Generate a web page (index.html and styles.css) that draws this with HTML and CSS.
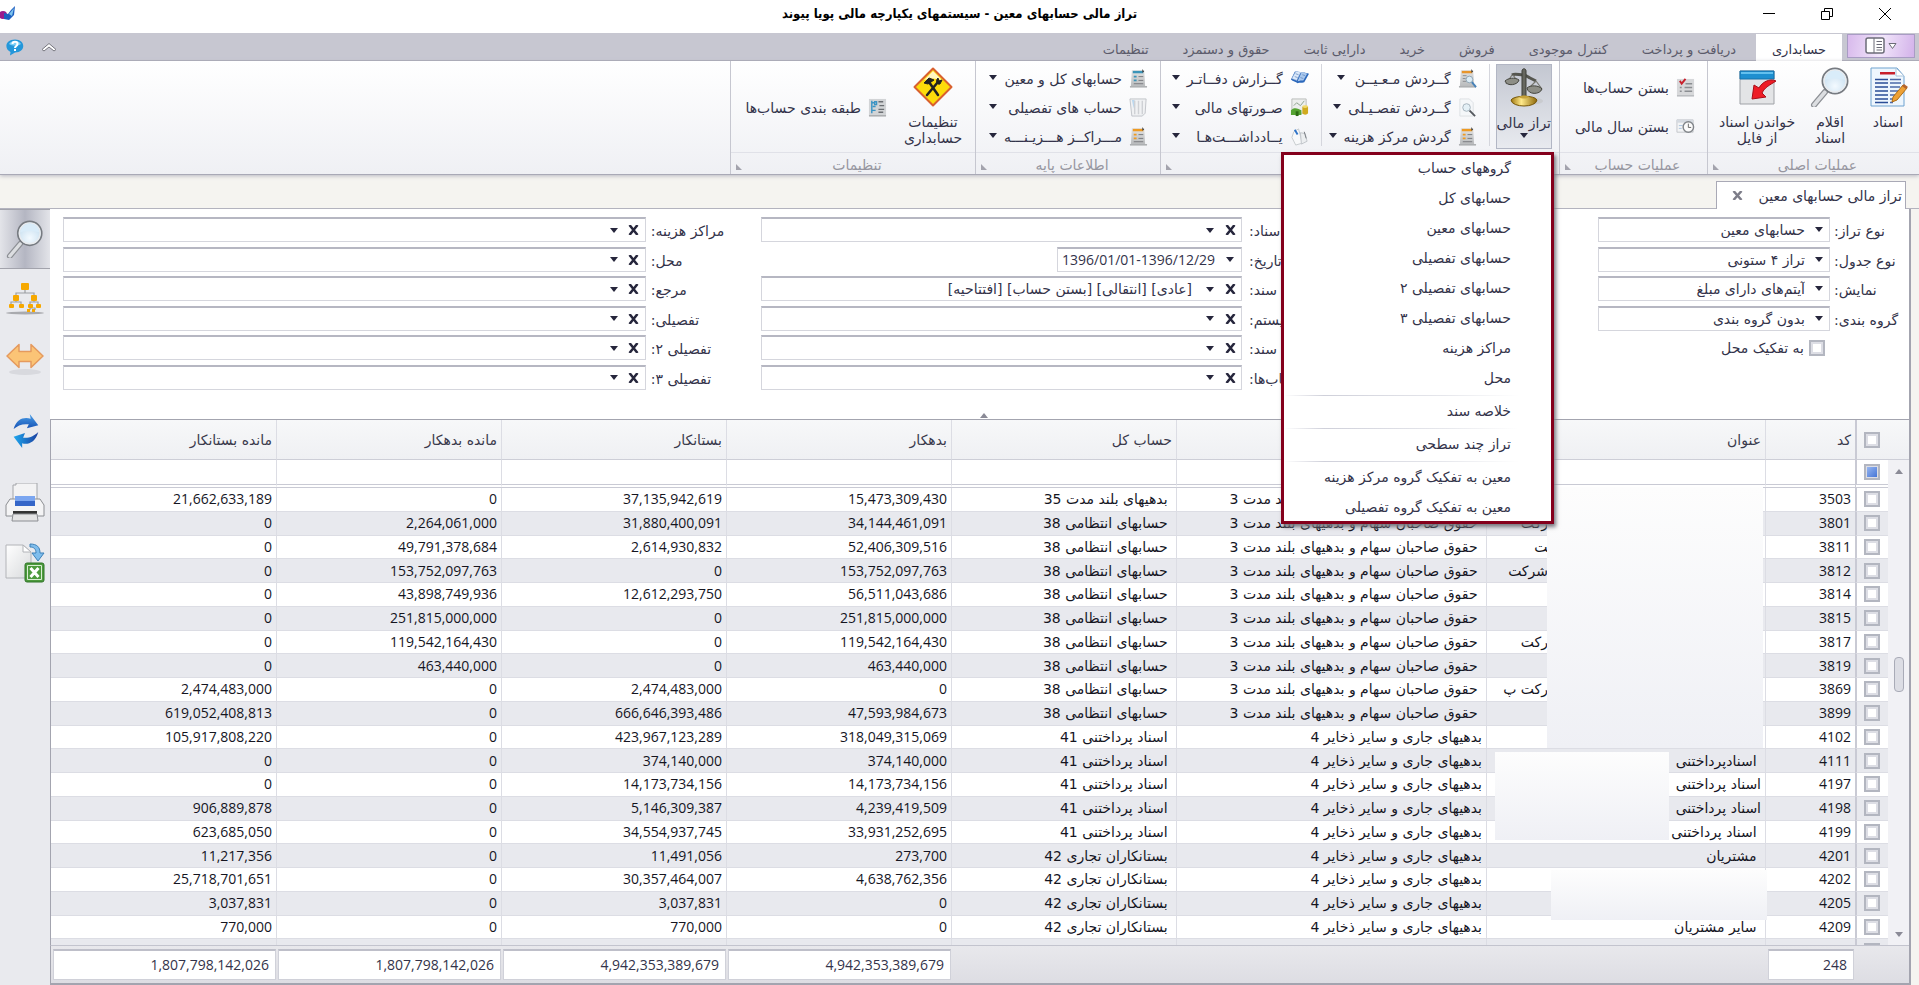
FILE: index.html
```html
<!doctype html>
<html lang="fa" dir="rtl">
    <head>
        <meta charset="UTF-8" />
        <meta name="viewport" content="width=device-width, initial-scale=1.0" />
        <title>تراز مالی حسابهای معین - سیستمهای یکپارچه مالی پویا پیوند</title>
        <link rel="stylesheet" href="styles.css">
    </head>
    <body>
        <!-- icons -->
        <svg class="sprite" aria-hidden="true">
            <defs>
                <linearGradient id="g-gray" x1="0" y1="0" x2="0" y2="1">
                    <stop offset="0" stop-color="#e4e4e4" />
                    <stop offset="1" stop-color="#b9bbbd" />
                </linearGradient>
                <linearGradient id="g-paper" x1="0" y1="0" x2="1" y2="1">
                    <stop offset="0" stop-color="#ffffff" />
                    <stop offset="1" stop-color="#d8dadc" />
                </linearGradient>
                <linearGradient id="g-blue" x1="0" y1="0" x2="0" y2="1">
                    <stop offset="0" stop-color="#4aa0e8" />
                    <stop offset="1" stop-color="#1550b4" />
                </linearGradient>
                <linearGradient id="g-blue2" x1="0" y1="0" x2="1" y2="0">
                    <stop offset="0" stop-color="#1fa8ee" />
                    <stop offset="1" stop-color="#1a3fa0" />
                </linearGradient>
                <linearGradient id="g-gold" x1="0" y1="0" x2="1" y2="0">
                    <stop offset="0" stop-color="#a27a10" />
                    <stop offset=".4" stop-color="#ffe98a" />
                    <stop offset="1" stop-color="#8d6708" />
                </linearGradient>
                <radialGradient id="g-lens" cx=".5" cy=".7" r=".7">
                    <stop offset="0" stop-color="#f3faff" />
                    <stop offset="1" stop-color="#bfd9ec" />
                </radialGradient>
            </defs>
            <symbol id="i-doc" viewBox="0 0 40 40">
                <path d="M3 1h26l7 8v30H3z" fill="#eef6fd" stroke="#6fa3d0" />
                <path d="M28 1v8h8z" fill="#fff" stroke="#a9c4dd" />
                <path d="M12 5h15v2.500H12z" fill="#c8202c" />
                <path d="M7 12.500h13M7 16h13M7 20h13M7 24h13M7 28h13M7 32h13M7 35.500h13" stroke="#2a4d96" stroke-width="1.500" />
                <path d="M22 12.500h11M22 16h11M22 20h10M22 24h8M22 28h5M22 32h3M22 35.500h3" stroke="#4c69a8" stroke-width="1.500" />
                <path d="M25 30 35 18l4 3-10 12-5 2z" fill="#eea136" stroke="#ad6c15" />
                <path d="m36 17 4 3-2 2-4-3z" fill="#b4642c" />
            </symbol>
            <symbol id="i-lens" viewBox="0 0 40 40">
                <path d="m15 25-11 13" stroke="#8c8f94" stroke-width="6" stroke-linecap="round" />
                <path d="m15 25-11 13" stroke="#dcdee1" stroke-width="3.500" stroke-linecap="round" />
                <circle cx="25" cy="14" r="12.500" fill="url(#g-lens)" stroke="#777b81" stroke-width="2" />
                <circle cx="25" cy="14" r="11" fill="none" stroke="#e8ebee" stroke-width="1.500" />
                <path d="M15 13c5-2 14-2 20 0-1-12-18-13-20 0z" fill="#d9ecf9" />
            </symbol>
            <symbol id="i-import" viewBox="0 0 40 40">
                <path d="M3 4h34v33H3z" fill="#e3e4e6" stroke="#9fa2a7" />
                <path d="M3 4h34v8H3z" fill="#1d8fd0" stroke="#1470aa" />
                <path d="M4 5h32v2H4z" fill="#62c0ee" />
                <path d="M39 14c-6-3-14 1-17 7l-5-3-2 14 14-2-4-4c3-6 8-8 14-12z" fill="#ee1c25" stroke="#a80e17" />
            </symbol>
            <symbol id="i-scale" viewBox="0 0 40 40">
                <ellipse cx="24" cy="33" rx="15" ry="4" fill="#c9cbcf" />
                <path d="M8 7c3-2 7 0 11 0 3 0 5 2 7 3l6 3" fill="none" stroke="#55564f" stroke-width="3" />
                <path d="m8 7-6 9M9 7l5 7M32 13l-7 7M32 13l6 8" stroke="#77776f" stroke-width="1.200" />
                <path d="M1 13c3-3 10-4 14-1-1 5-12 7-14 1z" fill="#8d8e86" stroke="#45463f" />
                <path d="M23 20c3-3 12-3 15 1-2 6-14 6-15-1z" fill="#8d8e86" stroke="#45463f" />
                <path d="M18 3c0-3 4-3 4 0v27h-4z" fill="#66675f" stroke="#3d3e38" />
                <path d="M7 32c3-5 24-5 26 0-1 8-25 8-26 0z" fill="url(#g-gold)" stroke="#75560a" />
                <path d="M15 29c2-2 8-2 10 0-2 2-8 2-10 0z" fill="#c7a23a" />
            </symbol>
            <symbol id="i-tools" viewBox="0 0 40 40">
                <path d="M20 1.500 38.500 20 20 38.500 1.500 20z" fill="#fddc0b" stroke="#d9602e" stroke-width="2" stroke-linejoin="round" />
                <path d="M20 4 29 13c-6-2-12-2-18 0z" fill="#fff6c0" />
                <path d="m16 15 9 13M25 15 14 28" stroke="#222" stroke-width="2.500" stroke-linecap="round" />
                <path d="m11 16 5-5 5 2-6 4z" fill="#222" stroke="#222" stroke-linejoin="round" />
                <path d="M25 11c-3 3-1 7 2 6l2-4-3 1z" fill="#222" stroke="#222" stroke-linejoin="round" />
            </symbol>
            <symbol id="i-sheet" viewBox="0 0 20 20">
                <path d="M3 1h13l1 17H2z" fill="url(#g-gray)" />
                <path d="M1 18h18v1.500H1z" fill="#a5a7aa" />
                <path d="M4 2h11v2.500H4z" fill="var(--tone)" />
                <path d="m14 0 2 3-2 1z" fill="#444" />
                <path d="M5 7h3v2H5zM5 11h3v2H5z" fill="var(--tone)" />
                <path d="M10 8h5M10 12h5M5 15.500h10" stroke="#77797d" />
            </symbol>
            <symbol id="i-sheet-search" viewBox="0 0 20 20">
                <path d="M3 1h13l1 17H2z" fill="url(#g-gray)" />
                <path d="M1 18h18v1.500H1z" fill="#a5a7aa" />
                <path d="M4 2h11v2.500H4z" fill="#e8952a" />
                <path d="m14 0 2 3-2 1z" fill="#444" />
                <path d="M5 7h4M5 10h3M5 13h4" stroke="#8a8c8f" />
                <path d="m14 13 5 6" stroke="#4682b8" stroke-width="2" />
                <circle cx="12" cy="11" r="3.500" fill="#dcecf6" stroke="#8fa5b5" />
            </symbol>
            <symbol id="i-page-search" viewBox="0 0 20 20">
                <path d="M2 1h10l4 4v14H2z" fill="#f5f7f9" stroke="#dde0e4" />
                <path d="m12 13 6 6" stroke="#54585e" stroke-width="2" />
                <circle cx="9" cy="10" r="4" fill="#e4f0f6" stroke="#a4b2bc" />
            </symbol>
            <symbol id="i-book" viewBox="0 0 20 20">
                <path d="M1 11 5 3c2-1 4 0 6 1 3-1 6 0 9 1l-5 9c-3 1-5 0-7 1-2-2-5-2-7-4z" fill="#2c68bb" />
                <path d="M6 3c2-1 4 0 5 1l-4 8c-2-1-3-1-5-2z" fill="#dbe9fa" stroke="#9bb7dc" stroke-width=".5" />
                <path d="M12 4c2-1 4 0 6 1l-4 7c-2 0-4 0-6 1z" fill="#a9c8ee" />
                <path d="m6 5 3 1M5 8l3 1M13 6l3 1M11 9l3 1" stroke="#5b7fb3" stroke-width=".7" />
            </symbol>
            <symbol id="i-chart" viewBox="0 0 20 20">
                <path d="M2 1h15v15H2z" fill="#eceeed" stroke="#b9bcb9" />
                <path d="m4 8 3-3 4 3 4-5" fill="none" stroke="#8ca18c" />
                <path d="M1 13c3-4 8-2 11 0v5H1z" fill="#55a332" />
                <path d="M6 14h3v5H6z" fill="#2c6b14" />
                <ellipse cx="16" cy="9" rx="3" ry="1.500" fill="#f4da65" />
                <path d="M13 9c1 2 5 2 6 0v7c-1 2-5 2-6 0z" fill="#d0aa1d" />
            </symbol>
            <symbol id="i-notes" viewBox="0 0 20 20">
                <path d="m4 5 5-3 4 15-7 2-4-8z" fill="#f8f9fa" stroke="#c6cace" />
                <path d="m11 6 5 1 2 8-6 3z" fill="#eceef0" stroke="#c0c4c9" />
                <path d="m5 3 3 5" stroke="#2f74c9" stroke-width="2" />
                <path d="m15 5 2 7" stroke="#777b81" />
            </symbol>
            <symbol id="i-pages" viewBox="0 0 20 20">
                <path d="M1 1h17l-1 15-3 3H3z" fill="#f0f1f3" stroke="#c0c3c8" />
                <path d="M3 2h3l-1 9z" fill="#bcd8ee" />
                <path d="M6 3v14M10 3v14M14 3v14" stroke="#cfd1d5" stroke-width="1.500" />
            </symbol>
            <symbol id="i-check-sheet" viewBox="0 0 20 20">
                <path d="M1 1h18v17H1z" fill="#d7d8da" />
                <path d="M1 18h18v1.500H1z" fill="#b5b7ba" />
                <path d="m4 3 2 3 4-5" fill="none" stroke="#c8202c" stroke-width="2" />
                <path d="M10 6h7M4 10h2M9 10h8M4 14h2M9 14h8" stroke="#8b8e92" stroke-width="1.500" />
            </symbol>
            <symbol id="i-clock" viewBox="0 0 20 20">
                <path d="M1 3h17v13H1z" fill="#f3f4f5" stroke="#c3c6ca" />
                <path d="M1 3h17v3H1z" fill="#d5dae1" />
                <path d="M3 9h4M3 12h3" stroke="#a9c3de" />
                <circle cx="13" cy="10.500" r="5.500" fill="#fbfbfb" stroke="#808489" stroke-width="1.500" />
                <path d="M13 7v4h3" fill="none" stroke="#666" />
            </symbol>
            <symbol id="i-class" viewBox="0 0 20 20">
                <path d="M1 1h18v17H1z" fill="#d2d4d6" />
                <path d="M1 18h18v1.500H1z" fill="#a5a7aa" />
                <path d="M4 3v13M4 5h3M5 9h3M4 13h4M7 4h2v3H7z" fill="none" stroke="#3b94c4" stroke-width="1.500" />
                <path d="M11 4h5M12 8h5M11 12h6M11 15h5" stroke="#6c6f73" stroke-width="1.500" />
            </symbol>
            <symbol id="i-tree" viewBox="0 0 38 32">
                <ellipse cx="19" cy="30" rx="19" ry="1.500" fill="#a9aaae" />
                <path d="M19 6v4M10 14v-4h18v4M10 17v2M28 17v2M5 22v-3h10v3M24 22v-3h8v3M24 27v-2h5v2" fill="none" stroke="#9c9ea2" stroke-width="1.200" />
                <g fill="#f6a800"><rect x="15" y="0" width="8" height="7" rx="1" /><rect x="7" y="12" width="6" height="6" rx="1" /><rect x="25" y="12" width="6" height="6" rx="1" /><rect x="3" y="21" width="5" height="4" rx="1" /><rect x="13" y="21" width="5" height="4" rx="1" /><rect x="22" y="21" width="5" height="4" rx="1" /><rect x="30" y="21" width="5" height="4" rx="1" /><rect x="21" y="26" width="3" height="3" /><rect x="26" y="26" width="3" height="3" /></g>
            </symbol>
            <symbol id="i-swap" viewBox="0 0 38 32">
                <ellipse cx="19" cy="29" rx="16" ry="3" fill="#d8d9de" />
                <path d="M1 13 13 1.500v7h12v-7L37 13 25 24.500v-6H13v6z" fill="#fbc476" stroke="#e59a5e" stroke-width="1.500" stroke-linejoin="round" />
            </symbol>
            <symbol id="i-refresh" viewBox="0 0 38 38">
                <path d="M7 17C10 6 18 4 25 6l-1-5 9 12-12 3 2-4c-6-1-12 1-16 5z" fill="url(#g-blue)" />
                <path d="M33 20c-3 11-11 14-17 12v5L7 25l12-4-2 5c6 1 12-2 16-6z" fill="url(#g-blue2)" />
            </symbol>
            <symbol id="i-print" viewBox="0 0 40 40">
                <path d="M8 2h3V0h21v20H8z" fill="#f3f3f4" stroke="#a4a6aa" />
                <path d="M5 16h30l4 6v11H1V22z" fill="#f4f4f5" stroke="#8c8e92" />
                <path d="M10 13h20v9H10z" fill="#7ba6f0" />
                <path d="M10 18h20v5H10z" fill="#3566c8" />
                <path d="M8 28h24v4H8z" fill="#333" />
                <path d="M8 31h24l1 7H7z" fill="#e4e4e5" stroke="#8c8e92" />
            </symbol>
            <symbol id="i-excel" viewBox="0 0 40 40">
                <path d="M1 2h17l8 7v26H1z" fill="url(#g-paper)" stroke="#b2b4b8" />
                <path d="M18 2v7h8z" fill="#fff" stroke="#b2b4b8" />
                <path d="M25 1c7 0 10 3 10 9h4l-6 8-6-8h4c0-4-2-6-6-6z" fill="#7fbdec" stroke="#3b80b8" />
                <rect x="20" y="20" width="19" height="19" rx="2" fill="#4d9a3d" stroke="#2f7427" />
                <path d="M22.500 22.500h14v14h-14z" fill="none" stroke="#d9edd3" />
                <path d="m25.500 25 8 9M33.500 25l-8 9" stroke="#fff" stroke-width="3" />
            </symbol>
        </svg>

        <header class="titlebar">
            <div class="window-buttons">
                <button type="button" aria-label="بستن"><svg width="14" height="14"><path d="M1 1l12 12M13 1L1 13" stroke="#000" fill="none" /></svg></button>
                <button type="button" aria-label="بازگردانی"><svg width="14" height="14"><path d="M1.500 4.500h8v8h-8zM4.500 4V1.500h8v8H10" stroke="#000" fill="none" /></svg></button>
                <button type="button" aria-label="کوچک کردن"><svg width="14" height="14"><path d="M1 6.500h12" stroke="#000" fill="none" /></svg></button>
            </div>
            <h1>تراز مالی حسابهای معین - سیستمهای یکپارچه مالی پویا پیوند</h1>
            <svg class="app-logo" width="16" height="16" viewBox="0 0 16 16"><circle cx="3" cy="9" r="4" fill="#9a1c8c" /><path d="M4 7l4 1 3-4 4-4-1 9-5 5-5-1z" fill="#1d5fc0" /><path d="M9 8l5-6-2 8z" fill="#7fc4ee" /></svg>
        </header>

        <nav class="tabs">
            <button type="button" class="app-button" aria-label="منو">
                <svg width="32" height="18" viewBox="0 0 32 18"><rect x="1" y="1" width="18" height="15" rx="2" fill="#fff" stroke="#6c6c78" stroke-width="1.500" /><path d="M9 1v15M11.500 4.500H17M11.500 7.500H17M11.500 10.500H17M11.500 13H17" stroke="#6c6c78" /><path d="M24 6.500h7l-3.500 5z" fill="#fff" stroke="#6c6c78" /></svg>
            </button>
            <a href="#" class="tab active">حسابداری</a>
            <a href="#" class="tab">دریافت و پرداخت</a>
            <a href="#" class="tab">کنترل موجودی</a>
            <a href="#" class="tab">فروش</a>
            <a href="#" class="tab">خرید</a>
            <a href="#" class="tab">دارایی ثابت</a>
            <a href="#" class="tab">حقوق و دستمزد</a>
            <a href="#" class="tab">تنظیمات</a>
            <div class="tabs-end">
                <button type="button" aria-label="جمع کردن"><svg width="16" height="10" viewBox="0 0 16 10"><path d="M1 7.500 8 1.500l7 6-2 1.500-5-4-5 4z" fill="#fff" stroke="#77777f" /></svg></button>
                <button type="button" aria-label="راهنما"><svg width="18" height="17" viewBox="0 0 18 17"><path d="M9 .5c11 0 11 13 0 13L4 16.500l.5-3.500C-2 10-1 .5 9 .5z" fill="#2497da" /><path d="M3 5c2-4 10-4 12 0-3 2-9 2-12 0z" fill="#7fd0f6" /><path d="M6.500 5c0-3 5-3 5 0 0 2-2.500 2-2.500 4M9 10v2" fill="none" stroke="#fff" stroke-width="2" /></svg></button>
            </div>
        </nav>

        <section class="ribbon">
            <div class="group group-main">
                <div class="group-body">
                    <button type="button" class="big w-doc"><svg><use href="#i-doc" /></svg><span>اسناد</span></button>
                    <button type="button" class="big w-items"><svg><use href="#i-lens" /></svg><span>اقلام<br>اسناد</span></button>
                    <button type="button" class="big w-import"><svg><use href="#i-import" /></svg><span>خواندن اسناد<br>از فایل</span></button>
                </div>
                <div class="group-name">عملیات اصلی</div>
            </div>
            <div class="group group-close">
                <div class="group-body">
                    <div class="stack two">
                        <button type="button" class="small"><svg><use href="#i-check-sheet" /></svg>بستن حساب‌ها</button>
                        <button type="button" class="small"><svg><use href="#i-clock" /></svg>بستن سال مالی</button>
                    </div>
                </div>
                <div class="group-name">عملیات حساب</div>
            </div>
            <div class="group group-reports">
                <div class="group-body">
                    <button type="button" class="big pressed"><svg><use href="#i-scale" /></svg><span>تراز مالی</span><i class="arrow"></i></button>
                    <div class="stack ruled wide">
                        <button type="button" class="small"><svg><use href="#i-sheet-search" /></svg>گــردش مـعـیــن<i class="arrow"></i></button>
                        <button type="button" class="small"><svg><use href="#i-page-search" /></svg>گــردش تفصـیـلی<i class="arrow"></i></button>
                        <button type="button" class="small orange"><svg><use href="#i-sheet" /></svg>گردش مرکز هزینه<i class="arrow"></i></button>
                    </div>
                    <div class="stack ruled">
                        <button type="button" class="small"><svg><use href="#i-book" /></svg>گــزارش دفــاتـر<i class="arrow"></i></button>
                        <button type="button" class="small"><svg><use href="#i-chart" /></svg>صـورتهای مالی<i class="arrow"></i></button>
                        <button type="button" class="small"><svg><use href="#i-notes" /></svg>یــادداشـــت‌هـا<i class="arrow"></i></button>
                    </div>
                </div>
                <div class="group-name"></div>

                <ul class="menu">
                    <li><button type="button">گروههای حساب</button></li>
                    <li><button type="button">حسابهای کل</button></li>
                    <li><button type="button">حسابهای معین</button></li>
                    <li><button type="button">حسابهای تفصیلی</button></li>
                    <li><button type="button">حسابهای تفصیلی ۲</button></li>
                    <li><button type="button">حسابهای تفصیلی ۳</button></li>
                    <li><button type="button">مراکز هزینه</button></li>
                    <li><button type="button">محل</button></li>
                    <li class="split"><button type="button">خلاصه سند</button></li>
                    <li class="split"><button type="button">تراز چند سطحی</button></li>
                    <li class="split"><button type="button">معین به تفکیک گروه مرکز هزینه</button></li>
                    <li><button type="button">معین به تفکیک گروه تفصیلی</button></li>
                </ul>
            </div>
            <div class="group group-base">
                <div class="group-body">
                    <div class="stack">
                        <button type="button" class="small"><svg><use href="#i-sheet" /></svg>حسابهای کل و معین<i class="arrow"></i></button>
                        <button type="button" class="small"><svg><use href="#i-pages" /></svg>حساب های تفصیلی<i class="arrow"></i></button>
                        <button type="button" class="small orange"><svg><use href="#i-sheet" /></svg>مـــراکــز هـــزیـنـــه<i class="arrow"></i></button>
                    </div>
                </div>
                <div class="group-name">اطلاعات پایه</div>
            </div>
            <div class="group group-settings">
                <div class="group-body">
                    <button type="button" class="big w-tools"><svg><use href="#i-tools" /></svg><span>تنظیمات<br>حسابداری</span></button>
                    <div class="stack one">
                        <button type="button" class="small"><svg><use href="#i-class" /></svg>طبقه بندی حساب‌ها</button>
                    </div>
                </div>
                <div class="group-name">تنظیمات</div>
            </div>
        </section>

        <div class="documents">
            <div class="document-tab">
                <span>تراز مالی حسابهای معین</span>
                <button type="button" class="x" aria-label="بستن"><svg width="11" height="9" viewBox="0 0 11 9"><path d="M1.500 0l8 9M9.500 0l-8 9" stroke="currentColor" stroke-width="2.500" /></svg></button>
            </div>
        </div>

        <div class="workspace">
            <main class="content">
                <form class="filters">
                    <div class="fields fields-type">
                        <label for="kind">نوع تراز:</label>
                        <div class="pick"><select id="kind"><option>حسابهای معین</option></select></div>
                        <label for="table-kind">نوع جدول:</label>
                        <div class="pick"><select id="table-kind"><option>تراز ۴ ستونی</option></select></div>
                        <label for="show">نمایش:</label>
                        <div class="pick"><select id="show"><option>آیتم‌های دارای مبلغ</option></select></div>
                        <label for="grouping">گروه بندی:</label>
                        <div class="pick"><select id="grouping"><option>بدون گروه بندی</option></select></div>
                        <label class="by-place"><input type="checkbox">به تفکیک محل</label>
                    </div>
                    <div class="fields fields-doc" id="doc-fields"></div>
                    <div class="fields fields-detail" id="detail-fields"></div>
                    <i class="collapse"></i>
                </form>

                <div class="grid">
                    <div class="scroll">
                        <div class="scroll-head"></div>
                        <div class="track"><i class="up"></i><i class="thumb"></i><i class="down"></i></div>
                    </div>
                    <div class="table-wrap">
                        <table>
                            <colgroup>
                                <col class="c-check"><col class="c-code"><col><col class="c-group">
                                <col class="c-num"><col class="c-num"><col class="c-num"><col class="c-num"><col class="c-num">
                            </colgroup>
                            <thead>
                                <tr>
                                    <th><input type="checkbox" aria-label="انتخاب همه"></th>
                                    <th>کد</th>
                                    <th>عنوان</th>
                                    <th></th>
                                    <th>حساب کل</th>
                                    <th>بدهکار</th>
                                    <th>بستانکار</th>
                                    <th>مانده بدهکار</th>
                                    <th>مانده بستانکار</th>
                                </tr>
                                <tr class="search-row">
                                    <td><input type="checkbox" class="mixed" aria-label="فیلتر انتخاب"></td>
                                    <td></td><td></td><td></td><td></td><td></td><td></td><td></td><td></td>
                                </tr>
                            </thead>
                            <tbody id="rows"></tbody>
                        </table>
                        <div class="mask mask-top"></div>
                        <div class="mask mask-middle"></div>
                        <div class="mask mask-bottom"></div>
                    </div>
                </div>

                <div class="totals">
                    <output class="t-count">248</output>
                    <output class="t-sum">4,942,353,389,679</output>
                    <output class="t-sum">4,942,353,389,679</output>
                    <output class="t-sum">1,807,798,142,026</output>
                    <output class="t-sum">1,807,798,142,026</output>
                </div>
            </main>

            <aside class="side">
                <button type="button" class="on" aria-label="جستجو"><svg width="38" height="38"><use href="#i-lens" /></svg></button>
                <button type="button" aria-label="درخت"><svg width="38" height="32"><use href="#i-tree" /></svg></button>
                <button type="button" aria-label="عرض ستونها"><svg width="38" height="32"><use href="#i-swap" /></svg></button>
                <button type="button" class="apart" aria-label="بازخوانی"><svg width="36" height="36"><use href="#i-refresh" /></svg></button>
                <button type="button" class="apart" aria-label="چاپ"><svg width="40" height="40"><use href="#i-print" /></svg></button>
                <button type="button" aria-label="خروجی اکسل"><svg width="40" height="40"><use href="#i-excel" /></svg></button>
            </aside>
        </div>

        <script>
            const docFields = [
                ["اسناد:", ""],
                ["تاریخ:", "1396/01/01-1396/12/29", "date"],
                ["نوع سند:", "[عادی] [انتقالی] [بستن حساب] [افتتاحیه]"],
                ["سیستم:", ""],
                ["وضعیت سند:", ""],
                ["حساب‌ها:", ""]
            ];
            const detailFields = [
                ["مراکز هزینه:", ""],
                ["محل:", ""],
                ["مرجع:", ""],
                ["تفصیلی:", ""],
                ["تفصیلی ۲:", ""],
                ["تفصیلی ۳:", ""]
            ];

            const owners = "\u00a0حقوق صاحبان سهام و بدهیهای بلند مدت 3";
            const current = "بدهیهای جاری و سایر ذخایر 4";
            const a35 = "بدهیهای بلند مدت 35";
            const a38 = "حسابهای انتظامی 38";
            const a41 = "اسناد پرداختنی 41";
            const a42 = "بستانکاران تجاری 42";

            // کد، عنوان، گروه، حساب کل، بدهکار، بستانکار، مانده بدهکار، مانده بستانکار
            const data = [
                ["3503", "", owners, a35, "15,473,309,430", "37,135,942,619", "0", "21,662,633,189"],
                ["3801", "~رکت", owners, a38, "34,144,461,091", "31,880,400,091", "2,264,061,000", "0"],
                ["3811", "~\u200dت", owners, a38, "52,406,309,516", "2,614,930,832", "49,791,378,684", "0"],
                ["3812", "~شرکت", owners, a38, "153,752,097,763", "0", "153,752,097,763", "0"],
                ["3814", "", owners, a38, "56,511,043,686", "12,612,293,750", "43,898,749,936", "0"],
                ["3815", "", owners, a38, "251,815,000,000", "0", "251,815,000,000", "0"],
                ["3817", "~رکت", owners, a38, "119,542,164,430", "0", "119,542,164,430", "0"],
                ["3819", "", owners, a38, "463,440,000", "0", "463,440,000", "0"],
                ["3869", "~رکت پ", owners, a38, "0", "2,474,483,000", "0", "2,474,483,000"],
                ["3899", "", owners, a38, "47,593,984,673", "666,646,393,486", "0", "619,052,408,813"],
                ["4102", "", current, a41, "318,049,315,069", "423,967,123,289", "0", "105,917,808,220"],
                ["4111", "\u00a0اسنادپرداختنی", current, a41, "374,140,000", "374,140,000", "0", "0"],
                ["4197", "اسناد پرداختنی", current, a41, "14,173,734,156", "14,173,734,156", "0", "0"],
                ["4198", "اسناد پرداختنی", current, a41, "4,239,419,509", "5,146,309,387", "0", "906,889,878"],
                ["4199", "\u00a0اسناد پرداختنی", current, a41, "33,931,252,695", "34,554,937,745", "0", "623,685,050"],
                ["4201", "\u00a0مشتریان", current, a42, "273,700", "11,491,056", "0", "11,217,356"],
                ["4202", "", current, a42, "4,638,762,356", "30,357,464,007", "0", "25,718,701,651"],
                ["4205", "", current, a42, "0", "3,037,831", "0", "3,037,831"],
                ["4209", "\u00a0سایر مشتریان", current, a42, "0", "770,000", "0", "770,000"],
                ["", "", "", "", "", "", "", ""]
            ];

            const cross =
                '<svg width="11" height="10" viewBox="0 0 11 10"><path d="M1.500 0l8 10M9.500 0l-8 10" stroke="currentColor" stroke-width="2.500" /></svg>';

            function drawFields(id, list) {
                document.getElementById(id).innerHTML = list
                    .map(([label, value, type], i) => {
                        const name = `${id}-${i}`;
                        const clear = type
                            ? ""
                            : `<button type="button" aria-label="پاک کردن">${cross}</button>`;
                        return `<label for="${name}">${label}</label>
                            <div class="combo ${type || ""}">
                                ${clear}
                                <button type="button" aria-label="انتخاب"><i class="arrow"></i></button>
                                <input type="text" id="${name}" value="${value}">
                            </div>`;
                    })
                    .join("");
            }

            function drawRows() {
                document.getElementById("rows").innerHTML = data
                    .map((row) => {
                        const cells = row.map((text, i) => {
                            if (i === 1 && text[0] === "~") {
                                return `<td class="cut">${text.slice(1)}</td>`;
                            }
                            if (i === 3) {
                                return `<td>\u00a0${text}</td>`;
                            }
                            return i === 0 || i > 3
                                ? `<td class="num">${text}</td>`
                                : `<td>${text}</td>`;
                        });
                        return `<tr><td><input type="checkbox" aria-label="${row[0]}"></td>${cells.join("")}</tr>`;
                    })
                    .join("");
            }

            drawFields("doc-fields", docFields);
            drawFields("detail-fields", detailFields);
            drawRows();
        </script>
    </body>
</html>
```

FILE: styles.css
```css
* {
    box-sizing: border-box;
}
body {
    margin: 0;
    height: 100vh;
    display: flex;
    flex-direction: column;
    overflow: hidden;
    background-color: #f5f4f0;
    color: #33334a;
    font-family: "DejaVu Sans", sans-serif;
    font-size: 14px;
    line-height: 16px;
}
button,
input,
select {
    font: inherit;
    color: inherit;
}
button {
    margin: 0;
    padding: 0;
    border: none;
    background: none;
    white-space: nowrap;
    cursor: pointer;
}
svg {
    display: block;
    flex: none;
}
.sprite {
    position: absolute;
    width: 0;
    height: 0;
}
.arrow {
    flex: none;
    border: 4px solid transparent;
    border-top: 5px solid #26263c;
    border-bottom: none;
}

/* title bar */
.titlebar {
    flex: none;
    height: 33px;
    padding-bottom: 6px;
    display: flex;
    align-items: center;
    justify-content: space-between;
    background-color: #fff;
}
.titlebar h1 {
    margin: 0;
    font-family: "DejaVu Sans Condensed", "DejaVu Sans", sans-serif;
    font-size: 13px;
    color: #000;
}
.window-buttons {
    width: 180px;
    padding-right: 5px;
    display: flex;
}
.window-buttons button {
    width: 58px;
    height: 26px;
    display: flex;
    justify-content: center;
    align-items: center;
}
.app-logo {
    margin-right: 164px;
}

/* ribbon tabs */
.tabs {
    flex: none;
    height: 28px;
    padding: 1px 4px 0 6px;
    display: flex;
    font-size: 13px;
    background-color: #c7c7d1;
    border-bottom: 1px solid #a9a9b6;
}
.app-button {
    width: 68px;
    height: 24px;
    margin-left: 5px;
    display: flex;
    justify-content: center;
    align-items: center;
    direction: ltr;
    border: 1px solid #a99cc4;
    background: linear-gradient(100deg, #d8b9ec, #f1e6fa 50%, #d3b2ea);
}
.tab {
    padding: 8px 17px 0;
    color: #5b5b6b;
    text-decoration: none;
    white-space: nowrap;
}
.tab.active {
    width: 86px;
    height: 27px;
    margin-left: 3px;
    padding: 8px 0 0;
    text-align: center;
    color: #33334a;
    background-color: #fff;
}
.tabs-end {
    margin-right: auto;
    display: flex;
    align-items: center;
    gap: 17px;
}

/* ribbon */
.ribbon {
    flex: none;
    height: 114px;
    display: flex;
    background: linear-gradient(#fff, #eff0f4);
    border-bottom: 1px solid #a9a9b6;
    box-shadow: 0 1px 4px #b8b8c2;
    position: relative;
    z-index: 2;
}
.group {
    flex: none;
    display: flex;
    flex-direction: column;
    border-left: 1px solid #c6c7d0;
    position: relative;
}
.group::after {
    content: "";
    position: absolute;
    left: 5px;
    bottom: 4px;
    border: 3px solid #a3a3ad;
    border-top-color: transparent;
    border-right-color: transparent;
}
.group-main {
    width: 212px;
}
.group-close {
    width: 148px;
}
.group-reports {
    width: 399px;
}
.group-base {
    width: 185px;
}
.group-settings {
    width: 245px;
}
.group-body {
    height: 91px;
    display: flex;
    padding-top: 3px;
}
.group-name {
    height: 22px;
    padding-left: 8px;
    line-height: 24px;
    text-align: center;
    color: #9696a0;
    border-top: 1px solid #e0e1e8;
}
.big {
    display: flex;
    flex-direction: column;
    align-items: center;
    padding-top: 3px;
}
.big svg {
    width: 40px;
    height: 40px;
    margin-bottom: 7px;
}
.w-doc {
    width: 62px;
}
.w-items {
    width: 54px;
}
.w-import {
    width: 92px;
}
.w-tools {
    width: 84px;
}
.pressed {
    width: 64px;
    height: 85px;
    margin: 0 7px 0 6px;
    border: 1px solid #b2b6c4;
    background: linear-gradient(#c3c7d1, #e8eaef);
}
.pressed .arrow {
    margin-top: 2px;
}
.stack {
    flex: 1;
    padding: 0 12px;
    display: flex;
    flex-direction: column;
}
.stack.two {
    padding-top: 4px;
}
.stack.one {
    padding: 29px 4px 0;
}
.stack.two .small {
    height: 39px;
}
.stack.ruled {
    height: 82px;
    border-right: 1px solid #d5d6dd;
}
.stack.wide {
    flex: none;
    width: 168px;
    padding-right: 12px;
}
.small {
    --tone: #3b94b8;
    flex: none;
    height: 29px;
    display: flex;
    align-items: center;
    gap: 7px;
}
.small.orange {
    --tone: #ee9a22;
}
.small svg {
    width: 19px;
    height: 19px;
}
.small .arrow {
    margin-right: auto;
    margin-left: 3px;
    margin-bottom: 3px;
}

/* drop-down of the pressed button */
.menu {
    position: absolute;
    top: 91px;
    right: 5px;
    width: 273px;
    height: 372px;
    margin: 0;
    padding: 0;
    list-style: none;
    background-color: #fff;
    border: 3px solid #84001c;
    box-shadow: 2px 3px 4px #77777f;
    z-index: 3;
}
.menu button {
    width: 100%;
    height: 30px;
    padding: 0 40px 4px 0;
    text-align: right;
    display: block;
}
.menu .split {
    padding-top: 3px;
    background: linear-gradient(90deg, #fff, #cfd0da 15%, #e6e7ec 60%, #fff 88%) no-repeat top / 100% 1px;
}

/* open documents */
.documents {
    flex: none;
    height: 34px;
    padding: 6px 13px 0 0;
    border-bottom: 1px solid #b3b3be;
}
.document-tab {
    width: 190px;
    height: 28px;
    padding: 0 3px 0 11px;
    display: flex;
    align-items: center;
    justify-content: space-between;
    background-color: #fff;
    border: 1px solid #a9a9b6;
    border-bottom: none;
}
.document-tab .x {
    padding: 4px;
    color: #7d7d89;
}

/* workspace */
.workspace {
    flex: 1;
    min-height: 0;
    padding-right: 8px;
    display: flex;
}
.content {
    flex: 1;
    min-width: 0;
    display: flex;
    flex-direction: column;
    background-color: #fff;
    border-right: 2px solid #a3a4af;
    border-bottom: 2px solid #a3a4af;
}
.side {
    flex: none;
    width: 50px;
    display: flex;
    flex-direction: column;
    background-color: #e9eaee;
}
.side button {
    height: 60px;
    display: flex;
    justify-content: center;
    align-items: center;
}
.side .apart {
    margin-top: 12px;
}
.side .on {
    border-top: 1px solid #a2a3ac;
    border-bottom: 1px solid #a2a3ac;
    background: linear-gradient(90deg, #e3e4e9, #b4b6c2 50%, #e3e4e9);
}

/* filters */
.filters {
    flex: none;
    height: 210px;
    padding: 8px 13px 0;
    display: grid;
    grid-template-columns: 298px 6fr 5fr;
    position: relative;
}
.fields {
    height: 173px;
    display: grid;
    grid-template-columns: 62px 1fr;
    grid-template-rows: repeat(6, 25px);
    column-gap: 4px;
    align-content: space-between;
}
.fields-doc {
    grid-template-columns: 349px 1fr;
    column-gap: 7px;
}
.fields-detail {
    grid-template-columns: 110px 1fr;
    column-gap: 5px;
}
.fields label {
    display: flex;
    justify-content: flex-end;
    line-height: 28px;
    white-space: nowrap;
}
.fields .by-place {
    grid-column: 2;
    justify-content: flex-start;
    align-items: center;
    gap: 5px;
    padding-right: 5px;
}
.pick,
.combo {
    border: 1px solid #d5d6dd;
    border-top: 2px solid #b6b7c2;
    background-color: #fff;
    display: flex;
    align-items: center;
    position: relative;
}
.pick::before {
    content: "";
    position: absolute;
    right: 6px;
    top: 8px;
    border: 4px solid transparent;
    border-top: 5px solid #26263c;
    border-bottom: none;
}
.pick select {
    width: 100%;
    height: 22px;
    padding: 0 24px 0 0;
    appearance: none;
    border: none;
    background: none;
}
.combo {
    padding-right: 1px;
}
.combo button {
    width: 20px;
    height: 22px;
    display: flex;
    justify-content: center;
    align-items: center;
    color: #26263c;
}
.combo input {
    flex: 1;
    min-width: 0;
    height: 22px;
    padding: 0 8px;
    border: none;
    background: none;
}
.combo.date {
    width: 185px;
}
.combo.date input {
    direction: ltr;
    padding: 0 4px;
    font-family: "Open Sans", sans-serif;
}
.collapse {
    position: absolute;
    left: 50%;
    bottom: 1px;
    border: 4px solid transparent;
    border-bottom: 5px solid #8a8a96;
    border-top: none;
}
input[type="checkbox"] {
    appearance: none;
    width: 16px;
    height: 16px;
    margin: 0;
    display: block;
    background-color: #fff;
    border: 2px solid #b3b6c0;
    box-shadow: inset 0 0 0 2px #dddee5;
}
input[type="checkbox"].mixed {
    background: linear-gradient(135deg, #9fbdf3, #3f6fd4);
    box-shadow: inset 0 0 0 1px #dddee5;
}

/* table */
.grid {
    flex: 1;
    min-height: 0;
    display: flex;
    border-top: 1px solid #a3a4af;
    border-left: 1px solid #a3a4af;
}
.table-wrap {
    flex: 1;
    min-width: 0;
    overflow: hidden;
    position: relative;
}
.scroll {
    flex: none;
    width: 21px;
    display: flex;
    flex-direction: column;
}
.scroll-head {
    height: 40px;
    background: linear-gradient(#f7f8f9, #eff0f3);
    border-bottom: 1px solid #cdced7;
}
.track {
    flex: 1;
    padding: 9px 0 8px;
    display: flex;
    flex-direction: column;
    align-items: center;
    background-color: #f1f1f5;
}
.track .up,
.track .down {
    border: 4px solid transparent;
    border-bottom: 5px solid #8a8a96;
    border-top: none;
}
.track .down {
    margin-top: auto;
    border-bottom: none;
    border-top: 5px solid #8a8a96;
}
.track .thumb {
    width: 10px;
    height: 35px;
    margin-top: 183px;
    border: 1px solid #a9abb7;
    border-radius: 4px;
    background-color: #dcdde4;
}
table {
    width: 100%;
    height: 543px;
    table-layout: fixed;
    border-collapse: separate;
    border-spacing: 0;
    color: #15151f;
}
.c-check {
    width: 33px;
}
.c-code {
    width: 90px;
}
.c-group {
    width: 310px;
}
.c-num {
    width: 225px;
}
th,
td {
    padding: 0 4px;
    text-align: right;
    font-weight: normal;
    white-space: nowrap;
    overflow: hidden;
    border-left: 1px solid #dcdde4;
    border-bottom: 1px solid #dcdde4;
}
th {
    height: 40px;
    color: #3a3a4c;
    background: linear-gradient(#f7f8f9, #eff0f3);
    border-bottom-color: #cdced7;
}
th:first-child,
td:first-child {
    padding: 0 8px;
    border-left: 2px solid #c9cad4;
}
th:last-child,
td:last-child {
    border-left: none;
}
.search-row td {
    height: 28px;
    border-bottom: 4px double #c9cad4;
}
tbody td {
    line-height: 20px;
}
.num,
.totals {
    font-family: "Open Sans", sans-serif;
}
tbody tr:nth-child(even) {
    background-color: #e8e9ee;
}
td.cut {
    padding-right: 217px;
}
.mask {
    position: absolute;
    background: linear-gradient(#fdfdfd, #eff0f5);
}
.mask-top {
    top: 67px;
    right: 125px;
    width: 216px;
    height: 261px;
}
.mask-middle {
    top: 332px;
    right: 219px;
    width: 174px;
    height: 88px;
}
.mask-bottom {
    top: 450px;
    right: 121px;
    width: 216px;
    height: 50px;
}

/* totals */
.totals {
    flex: none;
    height: 38px;
    padding: 3px 55px 3px 2px;
    display: flex;
    gap: 2px;
    background: linear-gradient(#e8e8ec, #dddde3);
    border-top: 1px solid #c3c4ce;
    border-left: 1px solid #a3a4af;
}
.totals output {
    padding-right: 6px;
    line-height: 28px;
    background-color: #fff;
    border: 1px solid #d0d1d9;
    border-top: 2px solid #bebfc9;
}
.t-count {
    width: 86px;
    margin-left: auto;
}
.t-sum {
    width: 223px;
}
```
